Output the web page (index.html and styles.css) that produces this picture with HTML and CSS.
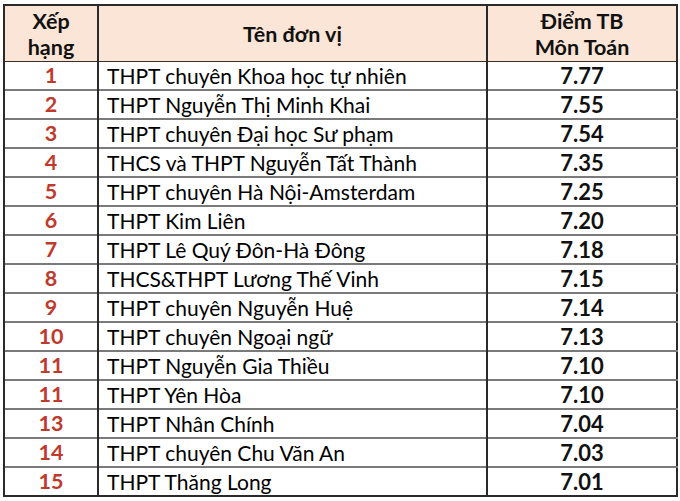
FILE: index.html
```html
<!DOCTYPE html>
<html lang="vi">
<head>
<meta charset="utf-8">
<link rel="stylesheet" href="styles.css">
</head>
<body>
<table class="rank-table">
  <colgroup>
    <col class="c-rank">
    <col class="c-name">
    <col class="c-score">
  </colgroup>
  <thead>
    <tr>
      <th>Xếp<br>hạng</th>
      <th>Tên đơn vị</th>
      <th>Điểm TB<br>Môn Toán</th>
    </tr>
  </thead>
  <tbody>
    <tr><td class="rank">1</td><td class="name">THPT chuyên Khoa học tự nhiên</td><td class="score">7.77</td></tr>
    <tr><td class="rank">2</td><td class="name">THPT Nguyễn Thị Minh Khai</td><td class="score">7.55</td></tr>
    <tr><td class="rank">3</td><td class="name">THPT chuyên Đại học Sư phạm</td><td class="score">7.54</td></tr>
    <tr><td class="rank">4</td><td class="name">THCS và THPT Nguyễn Tất Thành</td><td class="score">7.35</td></tr>
    <tr><td class="rank">5</td><td class="name">THPT chuyên Hà Nội-Amsterdam</td><td class="score">7.25</td></tr>
    <tr><td class="rank">6</td><td class="name">THPT Kim Liên</td><td class="score">7.20</td></tr>
    <tr><td class="rank">7</td><td class="name">THPT Lê Quý Đôn-Hà Đông</td><td class="score">7.18</td></tr>
    <tr><td class="rank">8</td><td class="name">THCS&amp;THPT Lương Thế Vinh</td><td class="score">7.15</td></tr>
    <tr><td class="rank">9</td><td class="name">THPT chuyên Nguyễn Huệ</td><td class="score">7.14</td></tr>
    <tr><td class="rank">10</td><td class="name">THPT chuyên Ngoại ngữ</td><td class="score">7.13</td></tr>
    <tr><td class="rank">11</td><td class="name">THPT Nguyễn Gia Thiều</td><td class="score">7.10</td></tr>
    <tr><td class="rank">11</td><td class="name">THPT Yên Hòa</td><td class="score">7.10</td></tr>
    <tr><td class="rank">13</td><td class="name">THPT Nhân Chính</td><td class="score">7.04</td></tr>
    <tr><td class="rank">14</td><td class="name">THPT chuyên Chu Văn An</td><td class="score">7.03</td></tr>
    <tr><td class="rank">15</td><td class="name">THPT Thăng Long</td><td class="score">7.01</td></tr>
  </tbody>
</table>
</body>
</html>
```
FILE: styles.css
```css
html, body {
  margin: 0;
  padding: 0;
  background: #ffffff;
}
body {
  padding: 4px 0 0 3px;
  font-family: "Lato", "Open Sans", sans-serif;
  color: #000000;
}
.rank-table {
  border-collapse: collapse;
  table-layout: fixed;
  width: 673px;
  border: 2px solid #2a2a2a;
}
.c-rank { width: 94px; }
.c-name { width: 389px; }
.c-score { width: 190px; }
.rank-table th {
  background: #fbe5d6;
  font-weight: 700;
  font-size: 21.5px;
  line-height: 26px;
  height: 55px;
  padding: 0;
  text-align: center;
  vertical-align: middle;
  border-left: 2px solid #2a2a2a;
  border-bottom: 1.5px solid #3d3028;
  color: #111111;
}
.rank-table td {
  height: 27px;
  padding: 0;
  font-size: 21px;
  line-height: 27px;
  border-top: 2px solid #7a7a7a;
  border-left: 2px solid #2a2a2a;
  white-space: nowrap;
}
.rank-table tbody tr:first-child td {
  border-top: 1.5px solid #3d3028;
}
.rank {
  text-align: center;
  font-weight: 700;
  font-size: 21.5px !important;
  color: #c0392b;
}
.name {
  padding-left: 8px !important;
}
.score {
  text-align: center;
  font-weight: 700;
  font-size: 22px !important;
  color: #111111;
}
```
